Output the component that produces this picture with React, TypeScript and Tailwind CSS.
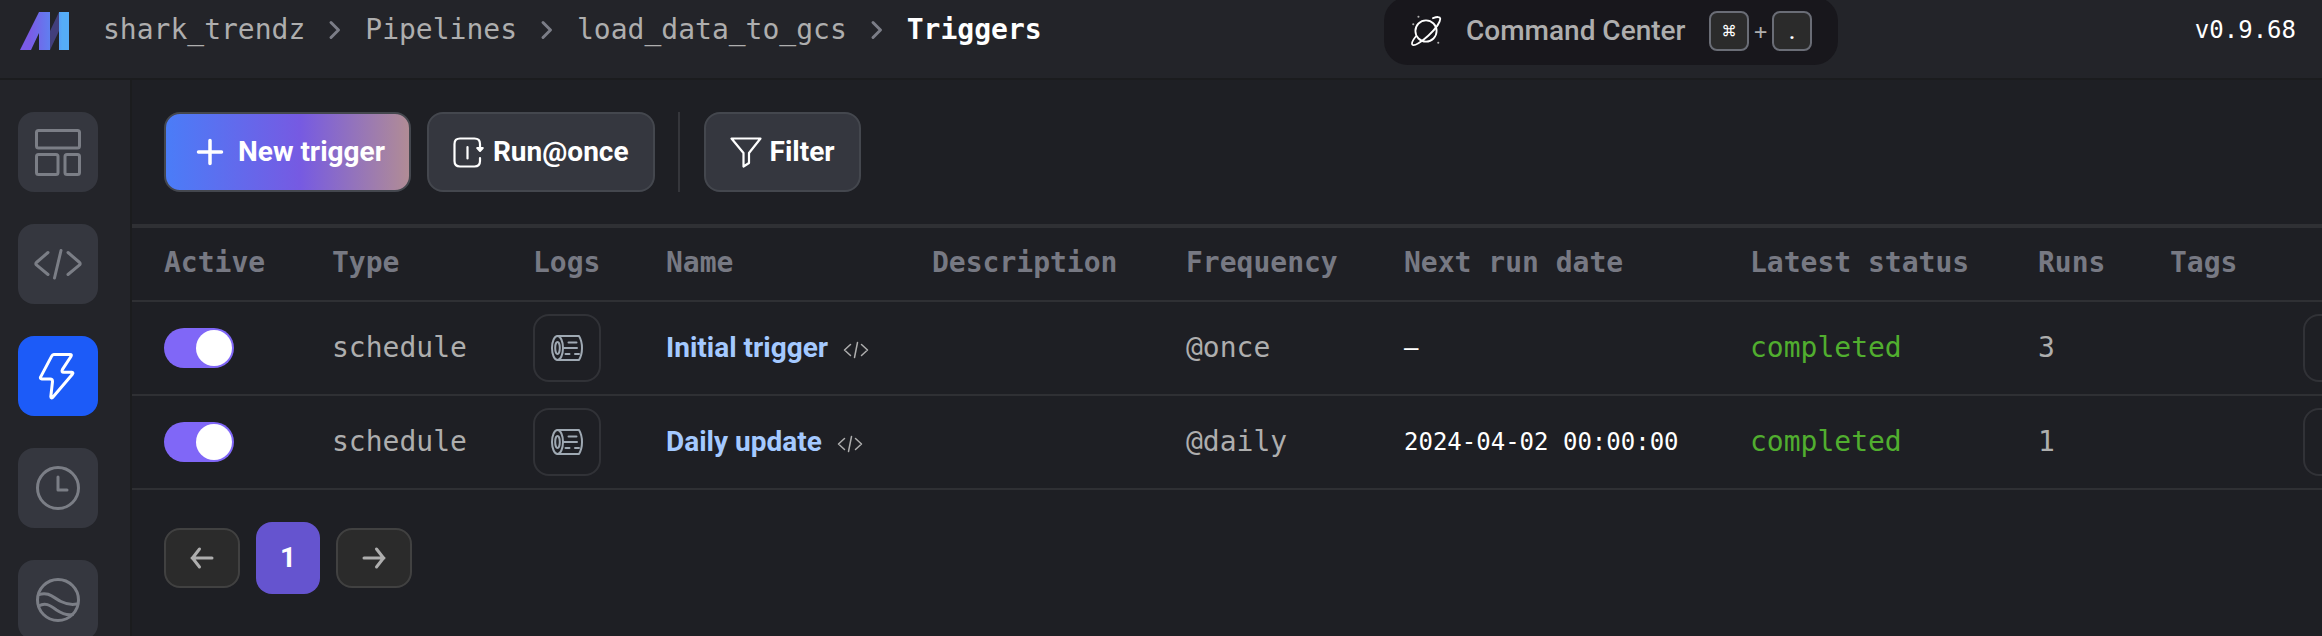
import type { ReactNode } from "react";

const MONO = "font-['DejaVu_Sans_Mono',monospace]";

function Logo() {
  return (
    <svg viewBox="0 0 50 38" className="h-[38px] w-[50px]" aria-hidden="true">
      <defs>
        <linearGradient id="mark" x1="0" y1="0" x2="50" y2="0" gradientUnits="userSpaceOnUse">
          <stop offset="0.2" stopColor="#7a5be6" />
          <stop offset="0.6" stopColor="#607ff0" />
          <stop offset="0.85" stopColor="#55adf7" />
        </linearGradient>
      </defs>
      <path d="M0 38 19 0h11v38H19V21L11 38Z" fill="url(#mark)" />
      <path d="M30 19 39 0v19L30 38Z" fill="#423f7c" />
      <path d="M39 0h10v38H39Z" fill="url(#mark)" />
    </svg>
  );
}

function Stroke({ box, className, width = 3, children }: { box: string; className: string; width?: number; children: ReactNode }) {
  return (
    <svg
      viewBox={box}
      className={`shrink-0 ${className}`}
      fill="none"
      stroke="currentColor"
      strokeWidth={width}
      strokeLinecap="round"
      strokeLinejoin="round"
      aria-hidden="true"
    >
      {children}
    </svg>
  );
}

const Chevron = () => (
  <Stroke box="0 0 14 20" className="h-5 w-3.5 text-[#7b7d87]" width={3}>
    <path d="M3 2.500 10.500 10 3 17.500" />
  </Stroke>
);

const Planet = () => (
  <Stroke box="0 0 32 32" className="size-8 text-white" width={1.8}>
    <circle cx="16" cy="16" r="10.6" />
    <path d="M23 3.2C27 1.6 30 1.6 30.2 3.4 30.6 7 25 14.500 18.500 20.500 11.500 27 4 31.500 2.400 29.700 1.300 28.400 2.700 25.300 6 21.300" />
    <path d="M8.400 1.800h.1M3.200 9.200h.1M28.200 27.700h.1" strokeWidth="2" stroke="#aeaeae" />
  </Stroke>
);

const Blocks = () => (
  <Stroke box="0 0 48 48" className="size-12">
    <rect x="2.500" y="2.500" width="43" height="17.500" rx="2" />
    <rect x="2.500" y="26.500" width="21.500" height="20" rx="2" />
    <rect x="31" y="26.500" width="14.500" height="20" rx="2" />
  </Stroke>
);

const CodeLarge = () => (
  <Stroke box="0 0 48 32" className="h-8 w-12">
    <path d="M14 4.500 2.400 14.500q-1.200 1.200 0 2.400L14 26.500M34 4.500l11.600 10q1.200 1.200 0 2.400L34 26.500M27 2.500 20.500 30" />
  </Stroke>
);

const Bolt = () => (
  <Stroke box="0 0 48 48" className="size-12">
    <path d="M19.800 2.400H36q2 0 1.100 1.800L28.500 17.400q-1.400 2.800 1.300 2.900h8q1.900.2.600 1.900L18.800 45.300q-1.800 1.500-2-.6L18.500 29.500q.1-2.500-2.400-2.600H7.900q-2.300-.2-1.200-2L17.800 3.900q.7-1.400 2-1.500Z" />
  </Stroke>
);

const Clock = () => (
  <Stroke box="0 0 48 48" className="size-12">
    <circle cx="24" cy="24" r="20.500" />
    <path d="M24 13v13h9" />
  </Stroke>
);

const Waves = () => (
  <Stroke box="0 0 48 48" className="size-12">
    <circle cx="24" cy="24" r="20.500" />
    <path d="M5 18.500c10-3 14 3 22 7 6 3 11 3.500 16 2.500M4.500 30c7-4 11-1 18 4 6 4 11 5.500 16 4.500" />
  </Stroke>
);

const LogIcon = () => (
  <Stroke box="0 0 32 32" className="size-8 text-[#9fa9b3]" width={2}>
    <ellipse cx="6.500" cy="16" rx="5.500" ry="12" />
    <ellipse cx="6.500" cy="16" rx="2.300" ry="6" />
    <path d="M6.500 4H28q3 5 3 12t-3 12H6.500M17.500 10.500h8M13 16h13M14.500 22h4M24 22h4" />
  </Stroke>
);

const CodeSmall = () => (
  <Stroke box="0 0 26 18" className="h-[18px] w-[26px] text-[#aeaeae]" width={1.5}>
    <path d="M7.500 3.500 1.500 9l6 5.500M18.500 3.500l6 5.500-6 5.500M14.500 1.500l-3 15" />
  </Stroke>
);

const Arrow = ({ left }: { left?: boolean }) => (
  <Stroke box="0 0 26 24" className="h-6 w-[26px] text-[#aeaeae]">
    <path d={left ? "M23 12H3M10.500 3l-7 9 7 9" : "M3 12h20M15.500 3l7 9-7 9"} />
  </Stroke>
);

const navItems = [
  { label: "Pipeline overview", icon: <Blocks />, active: false },
  { label: "Edit pipeline", icon: <CodeLarge />, active: false },
  { label: "Triggers", icon: <Bolt />, active: true },
  { label: "Runs history", icon: <Clock />, active: false },
  { label: "Backfills", icon: <Waves />, active: false },
];

const columns = [
  { title: "Active", width: "w-[168px]" },
  { title: "Type", width: "w-[201px]" },
  { title: "Logs", width: "w-[133px]" },
  { title: "Name", width: "w-[266px]" },
  { title: "Description", width: "w-[254px]" },
  { title: "Frequency", width: "w-[218px]" },
  { title: "Next run date", width: "w-[346px]" },
  { title: "Latest status", width: "w-[288px]" },
  { title: "Runs", width: "w-[132px]" },
  { title: "Tags", width: "w-[133px]" },
  { title: "", width: "w-[132px]" },
];

const triggers = [
  { name: "Initial trigger", frequency: "@once", next: "–", runs: 3 },
  { name: "Daily update", frequency: "@daily", next: "2024-04-02 00:00:00", runs: 1 },
];

const toolButton =
  "flex h-20 items-center gap-2 rounded-2xl border-2 border-[#44474e] px-6 text-[28px] font-bold text-white";
const cell = "p-0 pl-8 text-left whitespace-nowrap";
const outlineButton =
  "flex size-[68px] items-center justify-center rounded-2xl border-2 border-[#313237]";
const keyCap =
  "flex size-10 items-center justify-center rounded-lg border-2 border-[#6a6d76] bg-[#2b2b2b] text-[22px] text-white";

export default function App() {
  return (
    <div className="flex h-screen flex-col overflow-hidden bg-[#1e1f24] font-[Roboto,sans-serif] text-[28px] text-[#aeaeae]">
      <header className="flex h-20 shrink-0 items-start border-b-2 border-[#1b1c1e] bg-[#232429]">
        <div className="-mt-[3px] flex h-[68px] w-full items-center pr-[26px] pl-5">
          <div className="flex flex-1 items-center gap-[33px]">
            <a href="#home" aria-label="Home">
              <Logo />
            </a>
            <nav aria-label="Breadcrumb" className={`flex items-center gap-[23px] pb-0.5 text-[28px] leading-8 ${MONO}`}>
              <a href="#project">shark_trendz</a>
              <Chevron />
              <a href="#pipelines">Pipelines</a>
              <Chevron />
              <a href="#pipeline">load_data_to_gcs</a>
              <Chevron />
              <a href="#triggers" className="font-bold text-white" aria-current="page">
                Triggers
              </a>
            </nav>
          </div>
          <button className="flex h-[68px] w-[454px] items-center rounded-3xl bg-[#18171c] px-[26px] font-medium">
            <Planet />
            <span className="ml-6 flex-1 text-left">Command Center</span>
            <kbd className={`${keyCap} ${MONO}`}>⌘</kbd>
            <span className={`w-[23px] text-center text-[22px] font-normal ${MONO}`}>+</span>
            <kbd className={`${keyCap} font-[Roboto,sans-serif]`}>.</kbd>
          </button>
          <div className={`w-[458px] pb-0.5 text-right text-[24px] leading-8 text-white ${MONO}`}>v0.9.68</div>
        </div>
      </header>

      <div className="flex min-h-0 flex-1">
        <nav
          aria-label="Pipeline"
          className="flex w-[132px] shrink-0 flex-col gap-8 border-r-2 border-[#1b1c1e] bg-[#232429] pt-8 pl-[18px]"
        >
          {navItems.map((item) => (
            <a
              key={item.label}
              href="#section"
              aria-label={item.label}
              className={`flex size-20 shrink-0 items-center justify-center rounded-2xl ${
                item.active ? "bg-[#1c5bf8] text-white" : "bg-[#35373f] text-[#7b7e86]"
              }`}
            >
              {item.icon}
            </a>
          ))}
        </nav>

        <main className="min-w-0 flex-1 overflow-hidden">
          <div className="flex gap-4 px-8 py-8">
            <button
              className={`${toolButton} bg-[linear-gradient(90deg,#4a7df8_0%,#765ae2_55%,#b28d94_100%)] bg-origin-border`}
            >
              <Stroke box="0 0 40 40" className="size-10" width={3.5}>
                <path d="M20 8.500v23M8.500 20h23" />
              </Stroke>
              New trigger
            </button>
            <button className={`${toolButton} bg-[#35373f]`}>
              <Stroke box="0 0 32 32" className="size-8" width={2.2}>
                <path d="M27 13V8q0-5.500-5.500-5.500H7Q1.500 2.500 1.500 8v17q0 5.500 5.500 5.500h14.500Q27 30.500 27 25v-3" />
                <path d="M24.200 12h5.600L27 15Z" fill="currentColor" strokeWidth="2" />
                <path d="M14.500 11v11.500" />
              </Stroke>
              Run@once
            </button>
            <div className="ml-[7px] w-0.5 bg-[#35363b]" />
            <button className={`${toolButton} ml-2 bg-[#35373f]`}>
              <Stroke box="0 0 32 32" className="size-8" width={2.2}>
                <path d="M1.500 2.500h29L19 17v10l-5.500 3.500V17Z" />
              </Stroke>
              Filter
            </button>
          </div>

          <table className="w-max border-separate border-spacing-0 border-t-4 border-[#2f3034]">
            <colgroup>
              {columns.map((c, i) => (
                <col key={i} className={c.width} />
              ))}
            </colgroup>
            <thead>
              <tr className="h-[74px]">
                {columns.map((c, i) => (
                  <th
                    key={i}
                    scope="col"
                    className={`${cell} border-b-2 border-[#2f3034] pb-0.5 text-[28px] leading-8 font-bold text-[#777983] ${MONO}`}
                  >
                    {c.title}
                  </th>
                ))}
              </tr>
            </thead>
            <tbody>
              {triggers.map((t) => (
                <tr
                  key={t.name}
                  className={`h-[94px] text-[28px] leading-8 *:border-b-2 *:border-[#2f3034] ${MONO}`}
                >
                  <td className={cell}>
                    <input
                      type="checkbox"
                      defaultChecked
                      aria-label={`${t.name} active`}
                      className="flex h-10 w-[70px] appearance-none rounded-full bg-[#44474e] p-0.5 before:block before:size-9 before:rounded-full before:bg-white checked:justify-end checked:bg-[#8067f7]"
                    />
                  </td>
                  <td className={cell}>schedule</td>
                  <td className={cell}>
                    <button className={outlineButton} aria-label={`${t.name} logs`}>
                      <LogIcon />
                    </button>
                  </td>
                  <td className={cell}>
                    <div className="flex items-center gap-[15px]">
                      <a href="#trigger" className="font-[Roboto,sans-serif] text-[28px] font-bold text-[#a4c9ff]">
                        {t.name}
                      </a>
                      <span className="pt-1">
                        <CodeSmall />
                      </span>
                    </div>
                  </td>
                  <td className={cell} />
                  <td className={cell}>{t.frequency}</td>
                  <td className={`${cell} text-[24px] text-white`}>{t.next}</td>
                  <td className={`${cell} text-[#51ae2f]`}>completed</td>
                  <td className={cell}>{t.runs}</td>
                  <td className={cell} />
                  <td className={cell}>
                    <button className={outlineButton} aria-label={`Edit ${t.name}`} />
                  </td>
                </tr>
              ))}
            </tbody>
          </table>

          <nav aria-label="Pagination" className="flex items-center gap-4 px-8 py-8">
            <button
              aria-label="Previous page"
              className="flex h-[60px] w-[76px] items-center justify-center rounded-2xl border-2 border-[#414141] bg-[#2b2b2b]"
            >
              <Arrow left />
            </button>
            <button className="h-[72px] w-16 rounded-2xl bg-[#6554cf] font-bold text-white">1</button>
            <button
              aria-label="Next page"
              className="flex h-[60px] w-[76px] items-center justify-center rounded-2xl border-2 border-[#414141] bg-[#2b2b2b]"
            >
              <Arrow />
            </button>
          </nav>
        </main>
      </div>
    </div>
  );
}
